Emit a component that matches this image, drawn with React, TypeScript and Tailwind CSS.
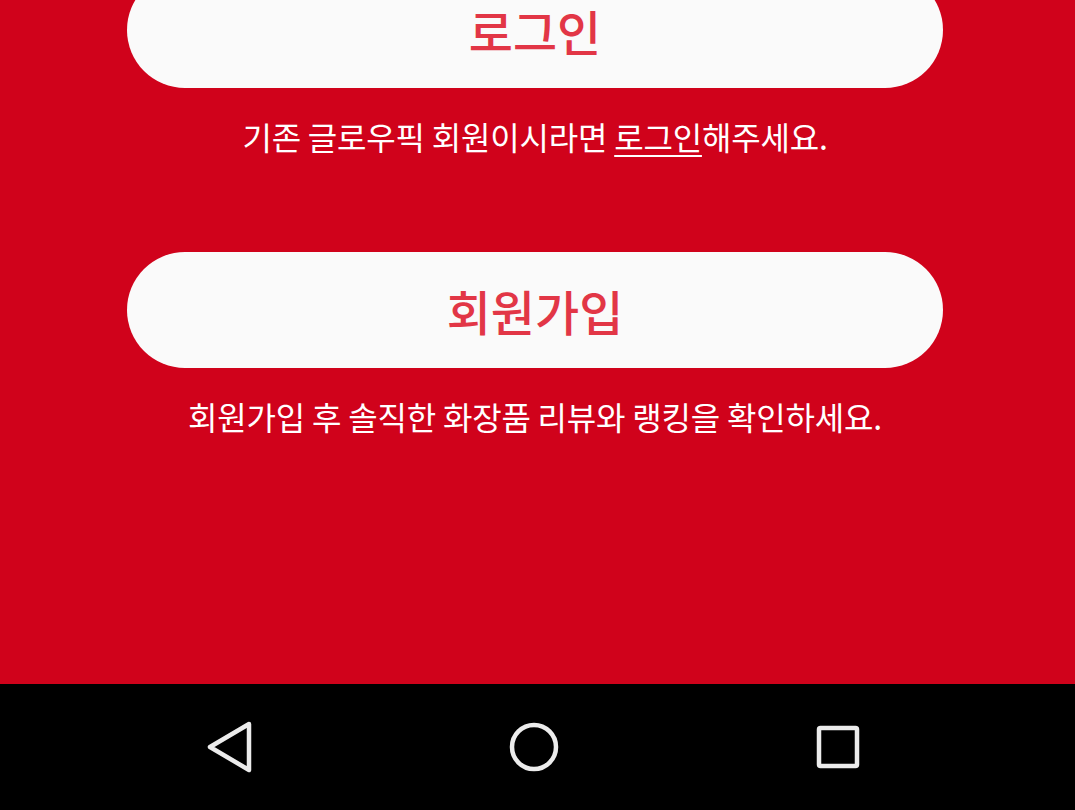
import { Fragment } from 'react';

const FONT = '"Noto Sans CJK KR", "Noto Sans", sans-serif';

const ACTIONS = [
  {
    label: '로그인',
    hint: (
      <Fragment>
        기존 글로우픽 회원이시라면 <span className="underline underline-offset-[5px] decoration-2">로그인</span>해주세요.
      </Fragment>
    ),
  },
  { label: '회원가입', hint: '회원가입 후 솔직한 화장품 리뷰와 랭킹을 확인하세요.' },
];

function NavBar() {
  return (
    <nav className="h-[126px] bg-black flex items-center justify-center gap-[244px] pr-[7px]">
      <button className="w-[60px] h-[60px] flex items-center justify-center">
        <svg width="50" height="54" viewBox="0 0 50 54" fill="none" stroke="#ececec" strokeWidth="4.5" strokeLinejoin="round">
          <path d="M44 4 L5 27 L44 50 Z" />
        </svg>
      </button>
      <button className="w-[60px] h-[60px] flex items-center justify-center">
        <svg width="54" height="54" viewBox="0 0 54 54" fill="none" stroke="#ececec" strokeWidth="4.5">
          <circle cx="27" cy="27" r="22" />
        </svg>
      </button>
      <button className="w-[60px] h-[60px] flex items-center justify-center">
        <svg width="48" height="48" viewBox="0 0 48 48" fill="none" stroke="#ececec" strokeWidth="4.5" strokeLinejoin="round">
          <rect x="5" y="5" width="38" height="38" rx="1.5" />
        </svg>
      </button>
    </nav>
  );
}

export default function App() {
  return (
    <div className="w-[1075px] h-[810px] flex flex-col overflow-hidden" style={{ fontFamily: FONT }}>
      <main className="flex-1 bg-[#d0021b] flex flex-col items-center pr-[5px]">
        <div className="mt-[-28px] flex flex-col items-center gap-[96px]">
          {ACTIONS.map((a) => (
            <div key={a.label} className="flex flex-col items-center">
              <button className="w-[816px] h-[116px] rounded-full bg-[#fafafa] text-[#e23646] text-[48px] font-medium leading-none flex items-center justify-center">
                {a.label}
              </button>
              <p className="mt-[28px] text-white text-[32px] leading-[40px] tracking-[-0.2px]">{a.hint}</p>
            </div>
          ))}
        </div>
      </main>
      <NavBar />
    </div>
  );
}
